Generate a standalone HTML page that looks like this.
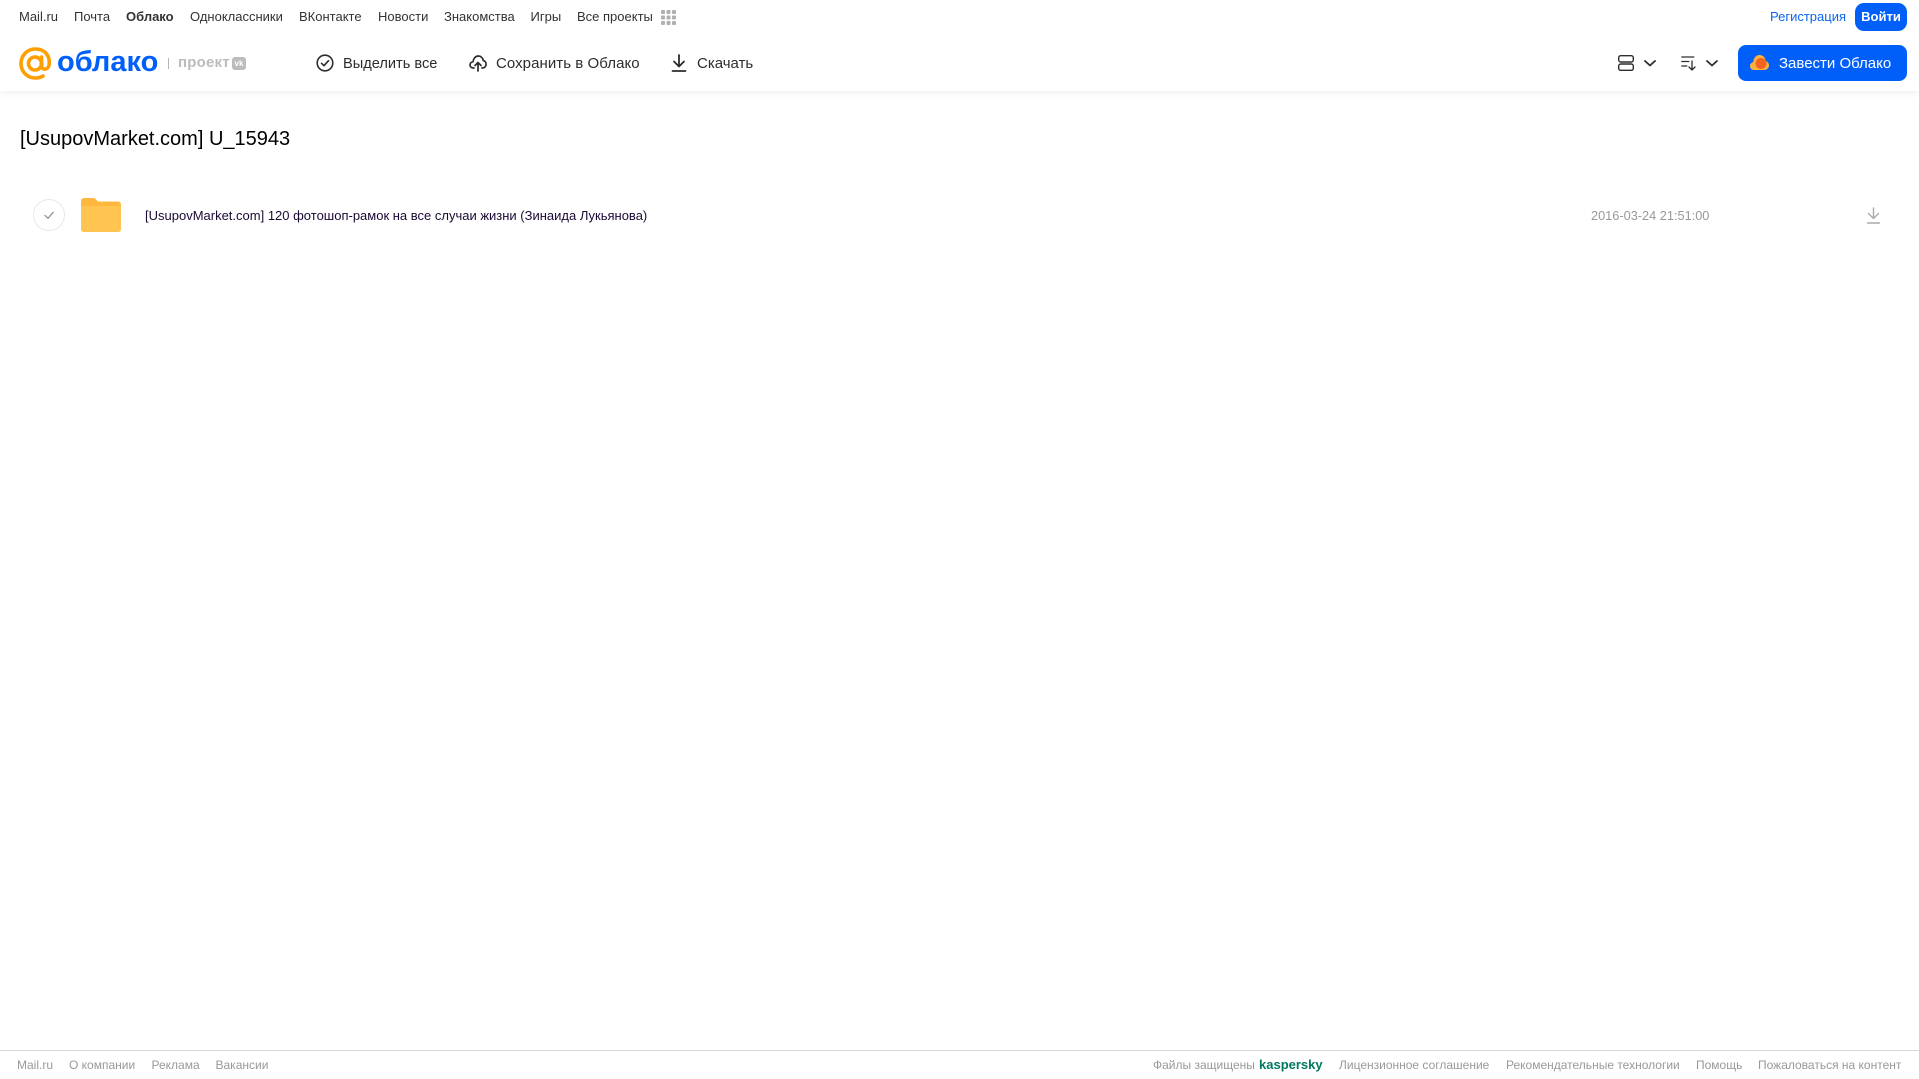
<!DOCTYPE html>
<html lang="ru"><head><meta charset="utf-8"><title>Облако</title>
<style>
html,body{margin:0;padding:0;background:#fff}
body{width:1919px;height:1079px;position:relative;overflow:hidden;font-family:"Liberation Sans",Arial,sans-serif}
.t{position:absolute;white-space:nowrap;line-height:20px}
.n{top:7px;font-size:13px;color:#333}
.b{top:53.500px;font-size:15px;color:#2c2d2e}
.f{top:1055px;font-size:12px;color:#999}
svg{position:absolute;overflow:visible}
#hd{position:absolute;left:0;top:0;width:1919px;height:91px;background:#fff;box-shadow:0 1px 8px rgba(0,0,0,.08)}
</style></head><body>
<div id="hd"></div>
<span class="t n" style="left:19px">Mail.ru</span>
<span class="t n" style="left:74px">Почта</span>
<span class="t n" style="left:126px;font-weight:bold">Облако</span>
<span class="t n" style="left:190px">Одноклассники</span>
<span class="t n" style="left:299px">ВКонтакте</span>
<span class="t n" style="left:378px">Новости</span>
<span class="t n" style="left:444px">Знакомства</span>
<span class="t n" style="left:530.500px">Игры</span>
<span class="t n" style="left:577px">Все проекты</span>
<svg style="left:661px;top:10px" width="15" height="15" fill="#b0b0b0"><rect x="0" y="0" width="4" height="4" rx="1"/><rect x="5.500" y="0" width="4" height="4" rx="1"/><rect x="11" y="0" width="4" height="4" rx="1"/><rect x="0" y="5.500" width="4" height="4" rx="1"/><rect x="5.500" y="5.500" width="4" height="4" rx="1"/><rect x="11" y="5.500" width="4" height="4" rx="1"/><rect x="0" y="11" width="4" height="4" rx="1"/><rect x="5.500" y="11" width="4" height="4" rx="1"/><rect x="11" y="11" width="4" height="4" rx="1"/></svg>
<svg style="left:19px;top:47px" width="33" height="33" fill="none" stroke="#ff9e00" stroke-width="3.600"><circle cx="16" cy="16.500" r="6.500"/><path d="M22.500 10v8.500c0 5 6.500 5 7.600-.5C31.500 8 25 2 16.500 2 8 2 2 8.500 2 16.500S8 31 16.500 31c3 0 5.500-.7 7.500-2" stroke-linecap="round"/></svg>
<span class="t" style="left:57px;top:46px;font-size:29px;line-height:32px;color:#005ff9;font-weight:bold">облако</span>
<div style="position:absolute;left:168px;top:58px;width:1px;height:11px;background:#b5b5b5"></div>
<span class="t" style="left:178px;top:53px;font-size:15px;font-weight:bold;color:#bcbcbc;letter-spacing:.2px">проект</span>
<div style="position:absolute;left:232px;top:57px;width:14px;height:13px;border-radius:3px;background:#bcbcbc;color:#fff;font-size:8px;font-weight:bold;line-height:13px;text-align:center">vk</div>
<svg style="left:316px;top:54px" width="18" height="18" fill="none" stroke="#2c2d2e" stroke-width="1.600" stroke-linecap="round" stroke-linejoin="round"><circle cx="9" cy="9" r="7.800"/><path d="M5.500 9.300l2.500 2.400 4.500-5"/></svg>
<span class="t b" style="left:343px;font-size:14.600px">Выделить все</span>
<svg style="left:469px;top:54px" width="18" height="18" fill="none" stroke="#2c2d2e" stroke-width="1.700" stroke-linecap="round" stroke-linejoin="round"><path d="M5 14H4.200C2.200 14 1 12.500 1 11c0-1.700 1.200-3 3-3.200C4.400 4.500 6.500 2 9.300 2c2.600 0 4.600 2 5 4.500 1.700.4 2.800 2 2.800 3.600 0 2-1.400 3.900-3.600 3.900H13"/><path d="M9 17V9M6 11.500L9 8.500l3 3"/></svg>
<span class="t b" style="left:496px;letter-spacing:.06px">Сохранить в Облако</span>
<svg style="left:671px;top:54px" width="16" height="18" fill="none" stroke="#2c2d2e" stroke-width="1.800" stroke-linecap="round" stroke-linejoin="round"><path d="M8 1v11M3 7.500L8 12.500l5-5M1.500 17h13"/></svg>
<span class="t b" style="left:697px">Скачать</span>
<span class="t" style="left:1770px;top:7px;font-size:13px;color:#0a66f0">Регистрация</span>
<div style="position:absolute;left:1855px;top:3px;width:52px;height:28px;border-radius:9px;background:#005ff9;color:#fff;font-size:13px;font-weight:bold;line-height:27px;text-align:center">Войти</div>
<svg style="left:1618px;top:55px" width="16" height="16" fill="none" stroke="#2c2d2e" stroke-width="1.400"><rect x=".7" y=".7" width="14.600" height="6.300" rx="2"/><rect x=".7" y="9" width="14.600" height="6.300" rx="2"/></svg>
<svg style="left:1644px;top:60px" width="12" height="7" fill="none" stroke="#2c2d2e" stroke-width="1.800" stroke-linecap="round" stroke-linejoin="round"><path d="M1 1l5 4.500L11 1"/></svg>
<svg style="left:1681px;top:55px" width="16" height="16" fill="none" stroke="#2c2d2e" stroke-width="1.300" stroke-linecap="round" stroke-linejoin="round"><path d="M.8 2h12M.8 6.500h7M.8 11h5M11 6v9M8 12l3 3 3-3"/></svg>
<svg style="left:1706px;top:60px" width="12" height="7" fill="none" stroke="#2c2d2e" stroke-width="1.800" stroke-linecap="round" stroke-linejoin="round"><path d="M1 1l5 4.500L11 1"/></svg>
<div style="position:absolute;left:1738px;top:45px;width:169px;height:36px;border-radius:8px;background:#005ff9"></div>
<svg style="left:1750px;top:54px" width="19" height="17"><path d="M4 16C1.800 16 0 14.300 0 12c0-2 1.400-3.600 3.200-3.900C3.600 4 6 1 9.500 1 13 1 15.400 3.800 15.700 7c1.900.4 3.300 2.200 3.300 4.300 0 2.600-2 4.700-4.500 4.700z" fill="#ffb13d"/><circle cx="11" cy="9.500" r="5.500" fill="#f5641e"/></svg>
<span class="t" style="left:1779px;top:53.500px;font-size:15px;color:#fff">Завести Облако</span>
<span class="t" style="left:20px;top:127px;font-size:20px;line-height:24px;color:#000">[UsupovMarket.com] U_15943</span>
<svg style="left:33px;top:199px" width="33" height="33" fill="none"><circle cx="16" cy="16" r="15.500" stroke="#e7e8ea"/><path d="M12 16.500l3 2.800 5.200-6" stroke="#999" stroke-width="1.400" stroke-linecap="round" stroke-linejoin="round"/></svg>
<svg style="left:81px;top:198px" width="40" height="34"><path d="M0 3a3 3 0 0 1 3-3h9c2 0 3 1 4 2.500l1 1h20a3 3 0 0 1 3 3V31a3 3 0 0 1-3 3H3a3 3 0 0 1-3-3z" fill="#ffb73d"/><path d="M0 8h40v23a3 3 0 0 1-3 3H3a3 3 0 0 1-3-3z" fill="#ffc550"/></svg>
<span class="t" style="left:145px;top:206px;font-size:13px;color:#1a0a33">[UsupovMarket.com] 120 фотошоп-рамок на все случаи жизни (Зинаида Лукьянова)</span>
<span class="t" style="left:1591px;top:206px;font-size:12.750px;color:#999">2016-03-24 21:51:00</span>
<svg style="left:1867px;top:207px" width="13" height="17" fill="none" stroke="#aaa" stroke-width="1.400" stroke-linecap="round" stroke-linejoin="round"><path d="M6.500 1v10.500M1.500 6.500l5 5 5-5M.5 16h12"/></svg>
<div style="position:absolute;left:0;top:1050px;width:1919px;height:1px;background:#d9d9d9"></div>
<span class="t f" style="left:17px">Mail.ru</span>
<span class="t f" style="left:69px">О компании</span>
<span class="t f" style="left:151.500px">Реклама</span>
<span class="t f" style="left:215.500px">Вакансии</span>
<span class="t f" style="left:1153px">Файлы защищены</span>
<span class="t" style="left:1259px;top:1055px;font-size:13px;font-weight:bold;color:#00795f">kaspersky</span>
<span class="t f" style="left:1339px">Лицензионное соглашение</span>
<span class="t f" style="left:1506px">Рекомендательные технологии</span>
<span class="t f" style="left:1696px">Помощь</span>
<span class="t f" style="left:1758px">Пожаловаться на контент</span>
</body></html>
